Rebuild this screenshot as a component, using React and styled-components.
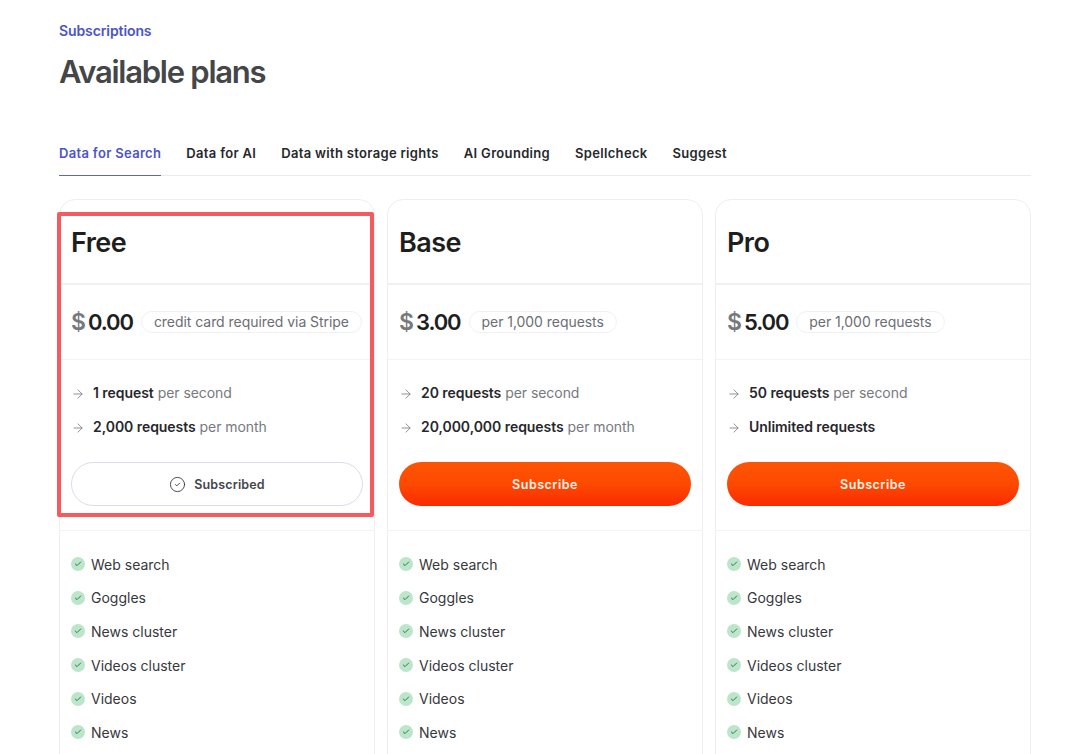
import React from "react";
import styled, { createGlobalStyle } from "styled-components";
import { ArrowRight, Check, CircleCheck } from "lucide-react";

const FEATURES = [
  "Web search",
  "Goggles",
  "News cluster",
  "Videos cluster",
  "Videos",
  "News"
];

const TABS = [
  "Data for Search",
  "Data for AI",
  "Data with storage rights",
  "AI Grounding",
  "Spellcheck",
  "Suggest"
];

const PLANS = [
  {
    name: "Free",
    price: "0.00",
    note: "credit card required via Stripe",
    limits: [
      { strong: "1 request", rest: " per second" },
      { strong: "2,000 requests", rest: " per month" }
    ],
    subscribed: true
  },
  {
    name: "Base",
    price: "3.00",
    note: "per 1,000 requests",
    limits: [
      { strong: "20 requests", rest: " per second" },
      { strong: "20,000,000 requests", rest: " per month" }
    ]
  },
  {
    name: "Pro",
    price: "5.00",
    note: "per 1,000 requests",
    limits: [
      { strong: "50 requests", rest: " per second" },
      { strong: "Unlimited requests", rest: "" }
    ]
  }
];

export default function App() {
  return (
    <Page>
      <GlobalStyle />
      <Eyebrow>Subscriptions</Eyebrow>
      <Title>Available plans</Title>
      <Tabs>
        {TABS.map((tab, index) => (
          <Tab key={tab} $active={index === 0}>
            {tab}
          </Tab>
        ))}
      </Tabs>
      <Plans>
        {PLANS.map(plan => (
          <Card key={plan.name}>
            {plan.subscribed && <Highlight />}
            <CardHeader>
              <PlanName>{plan.name}</PlanName>
            </CardHeader>
            <PriceRow>
              <Dollar>$</Dollar>
              <Amount>{plan.price}</Amount>
              <Note>{plan.note}</Note>
            </PriceRow>
            <LimitsBlock>
              <Limits>
                {plan.limits.map(limit => (
                  <Limit key={limit.strong}>
                    <LimitArrow size={14} strokeWidth={1.4} color="#77797d" />
                    <span>
                      <strong>{limit.strong}</strong>
                      {limit.rest}
                    </span>
                  </Limit>
                ))}
              </Limits>
              {plan.subscribed ? (
                <SubscribedButton>
                  <CircleCheck size={17} strokeWidth={1.2} color="#2b2d30" />
                  Subscribed
                </SubscribedButton>
              ) : (
                <SubscribeButton>Subscribe</SubscribeButton>
              )}
            </LimitsBlock>
            <Features>
              {FEATURES.map(feature => (
                <Feature key={feature}>
                  <CheckDot>
                    <Check size={8} strokeWidth={3} color="#2c7a4b" />
                  </CheckDot>
                  {feature}
                </Feature>
              ))}
            </Features>
          </Card>
        ))}
      </Plans>
    </Page>
  );
}

const GlobalStyle = createGlobalStyle`
  html, body {
    margin: 0;
    height: 754px;
    overflow: hidden;
    background: #ffffff;
  }
  body {
    font-family: Inter, "Liberation Sans", sans-serif;
    -webkit-font-smoothing: antialiased;
  }
`;

const Page = styled.div`
  box-sizing: border-box;
  width: 1080px;
  padding: 22px 49px 0 59px;
`;

const Eyebrow = styled.div`
  font-size: 14px;
  line-height: 17px;
  font-weight: 600;
  color: #4c54c8;
  letter-spacing: -0.1px;
`;

const Title = styled.h1`
  margin: 12px 0 0;
  font-size: 31px;
  line-height: 42px;
  font-weight: 600;
  letter-spacing: -1.25px;
  color: #444648;
`;

const Tabs = styled.div`
  display: flex;
  gap: 25px;
  margin-top: 45px;
  border-bottom: 1px solid #e9eaec;
`;

const Tab = styled.div`
  padding: 7px 0 14px;
  margin-bottom: -1px;
  font-size: 13px;
  line-height: 16px;
  font-weight: 600;
  letter-spacing: 0.32px;
  color: ${p => (p.$active ? "#4c54c8" : "#26282b")};
  border-bottom: 1px solid ${p => (p.$active ? "#5a62d2" : "transparent")};
`;

const Plans = styled.div`
  display: grid;
  grid-template-columns: repeat(3, 316px);
  gap: 12px;
  margin-top: 23px;
`;

const Card = styled.div`
  position: relative;
  box-sizing: border-box;
  border: 1px solid #eeeff1;
  border-radius: 16px;
  background: #ffffff;
`;

const Highlight = styled.div`
  position: absolute;
  top: 12px;
  left: -3px;
  right: 0;
  height: 305px;
  box-sizing: border-box;
  border: 4px solid #f55a5e;
  border-radius: 2px;
  pointer-events: none;
`;

const CardHeader = styled.div`
  box-sizing: border-box;
  height: 85px;
  padding: 25px 11px 0;
  border-bottom: 2px solid #f0f1f2;
`;

const PlanName = styled.h2`
  margin: 0;
  font-size: 27px;
  line-height: 36px;
  font-weight: 600;
  letter-spacing: -0.55px;
  color: #1c1e20;
`;

const PriceRow = styled.div`
  box-sizing: border-box;
  display: flex;
  align-items: center;
  height: 75px;
  padding: 0 11px;
  border-bottom: 1px solid #f2f3f4;
`;

const Dollar = styled.span`
  font-size: 23px;
  font-weight: 600;
  color: #77797d;
`;

const Amount = styled.span`
  margin-left: 2px;
  font-size: 22px;
  font-weight: 600;
  letter-spacing: -1.1px;
  color: #1c1e20;
`;

const Note = styled.span`
  margin-left: 8px;
  padding: 0 12px;
  font-size: 14px;
  line-height: 20px;
  letter-spacing: -0.05px;
  color: #6b6e73;
  border: 1px solid #f0f1f2;
  border-radius: 11px;
  white-space: nowrap;
`;

const LimitsBlock = styled.div`
  box-sizing: border-box;
  height: 171px;
  padding: 22px 11px 0;
  border-bottom: 1px solid #f2f3f4;
`;

const Limits = styled.div`
  display: flex;
  flex-direction: column;
  gap: 14px;
`;

const Limit = styled.div`
  display: flex;
  align-items: center;
  gap: 8px;
  height: 20px;
  font-size: 14px;
  color: #77797d;
  letter-spacing: -0.05px;

  strong {
    font-weight: 600;
    color: #26282b;
  }
`;

const LimitArrow = styled(ArrowRight)`
  flex: none;
  margin-top: 3px;
`;

const ButtonBase = styled.button`
  box-sizing: border-box;
  display: flex;
  align-items: center;
  justify-content: center;
  width: 100%;
  height: 44px;
  margin-top: 26px;
  border-radius: 22px;
  font-family: inherit;
  font-size: 12.5px;
  font-weight: 600;
`;

const SubscribedButton = styled(ButtonBase)`
  gap: 8px;
  letter-spacing: 0.15px;
  background: #ffffff;
  border: 1px solid #dcdde8;
  color: #44464a;
`;

const SubscribeButton = styled(ButtonBase)`
  border: 0;
  color: #fff3ec;
  letter-spacing: 0.5px;
  background: linear-gradient(180deg, #fd5504 0%, #fd4a02 50%, #fa2a00 100%);
`;

const Features = styled.div`
  display: flex;
  flex-direction: column;
  gap: 13.7px;
  padding: 23px 11px 32px;
`;

const Feature = styled.div`
  display: flex;
  align-items: center;
  gap: 6px;
  height: 20px;
  font-size: 14px;
  letter-spacing: 0;
  color: #36383b;
`;

const CheckDot = styled.span`
  display: flex;
  align-items: center;
  justify-content: center;
  flex: none;
  width: 14px;
  height: 14px;
  border-radius: 50%;
  background: #bde5cb;
`;
